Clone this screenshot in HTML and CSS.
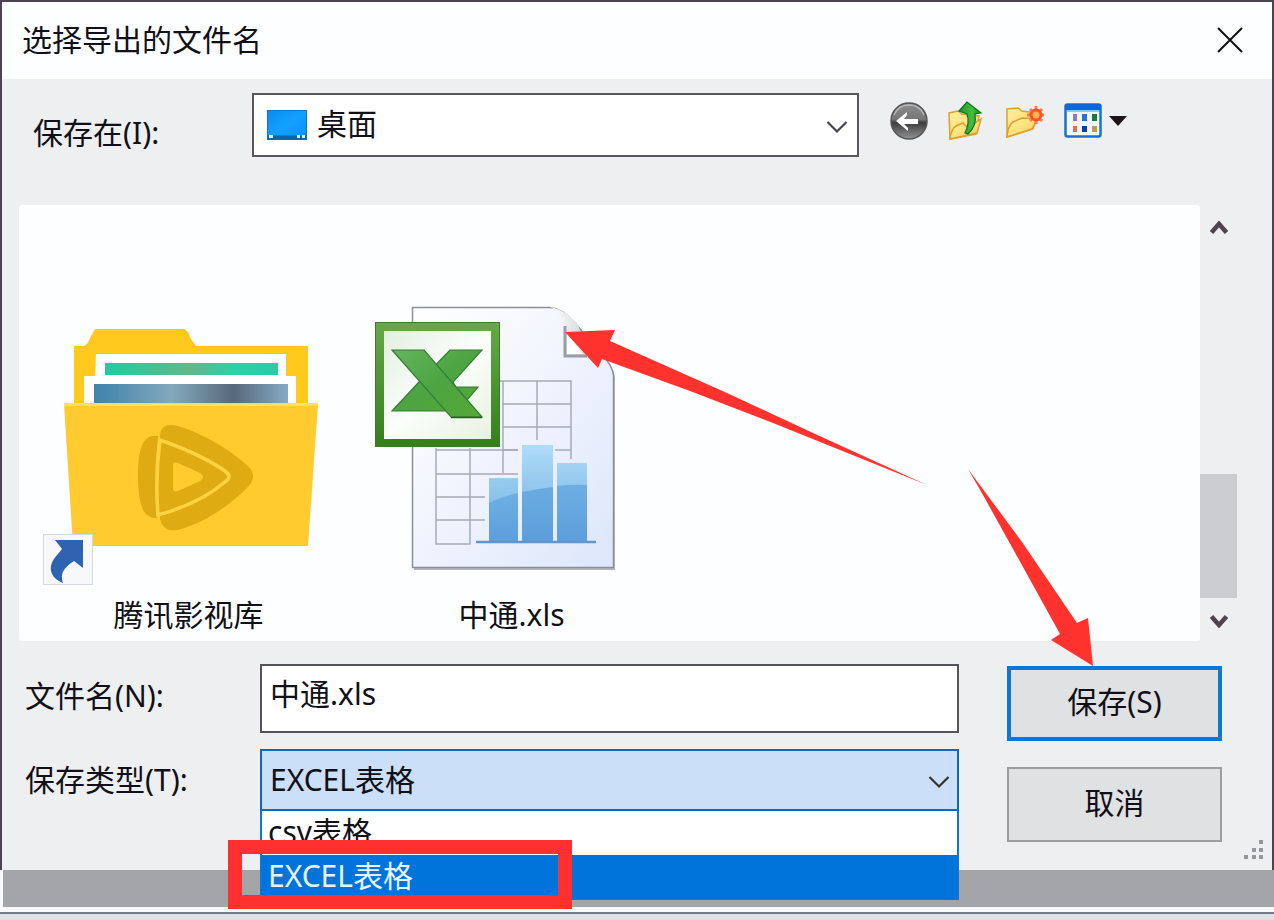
FILE: index.html
```html
<!DOCTYPE html>
<html lang="zh-CN">
<head>
<meta charset="utf-8">
<meta name="viewport" content="width=device-width, initial-scale=1">
<title>选择导出的文件名</title>
<link rel="stylesheet" href="styles.css">
</head>
<body>
<main class="dialog">
  <header class="titlebar">
    <h1 class="title">选择导出的文件名</h1>
    <button class="close" type="button" aria-label="关闭">
      <svg width="26" height="26" viewBox="0 0 26 26"><path d="M1 1L25 25M25 1L1 25" stroke="#111" stroke-width="2" fill="none"/></svg>
    </button>
  </header>

  <section class="lookin">
    <label class="lookin-label" for="folder">保存在(I):</label>
    <div class="combo">
      <svg class="combo-icon" width="40" height="30" viewBox="0 0 40 30">
        <defs><linearGradient id="desk" x1="0" y1="0" x2="1" y2="1"><stop offset="0" stop-color="#0a8cf0"/><stop offset=".5" stop-color="#14a0ff"/><stop offset="1" stop-color="#0492fa"/></linearGradient></defs>
        <rect x=".5" y=".5" width="39" height="29" fill="url(#desk)" stroke="#0874c4"/>
        <path d="M1 25.500h38v4H1z" fill="#0865ae"/>
        <path d="M2 25h4v3H2zM30 25h3v3h-3zM35 25h3v3h-3z" fill="#d8f1ff"/>
      </svg>
      <select class="combo-select" id="folder"><option>桌面</option></select>
      <svg class="chevron" width="22" height="14" viewBox="0 0 22 14"><path d="M1.500 2L11 11.500L20.500 2" stroke="#4a4350" stroke-width="2.200" fill="none"/></svg>
    </div>
    <div class="tools">
      <button class="tool" type="button" aria-label="后退">
        <svg width="40" height="40" viewBox="0 0 40 40">
          <defs><linearGradient id="ball" x1="0" y1="0" x2="0" y2="1"><stop offset="0" stop-color="#8c8c8c"/><stop offset=".45" stop-color="#777"/><stop offset=".55" stop-color="#3d3d3d"/><stop offset="1" stop-color="#949494"/></linearGradient></defs>
          <circle cx="20" cy="20" r="18" fill="url(#ball)" stroke="#555" stroke-width="1.500"/>
          <path d="M5 14C8 7 14 4 20 4s12 3 15 10" stroke="#ccc" stroke-width="1.500" fill="none" opacity=".7"/>
          <path d="M7 20L18 11V14L15 18H29V23H15L19 27V30z" fill="#fff"/>
        </svg>
      </button>
      <button class="tool" type="button" aria-label="向上一级">
        <svg width="40" height="40" viewBox="0 0 40 40">
          <defs>
            <linearGradient id="paper" x1="0" y1="0" x2="1" y2="1"><stop offset="0" stop-color="#fff0a0"/><stop offset=".5" stop-color="#ffe27a"/><stop offset="1" stop-color="#f5bd38"/></linearGradient>
            <linearGradient id="leaf" x1="0" y1="0" x2="1" y2="0"><stop offset="0" stop-color="#1d9428"/><stop offset=".6" stop-color="#45bd3d"/><stop offset="1" stop-color="#0f8020"/></linearGradient>
          </defs>
          <path d="M2 12L11 10L15 13L32 15L29 33L3 38z" fill="url(#paper)" stroke="#dba030" stroke-width="1.500"/>
          <path d="M3 38Q4 28 9 25L16 22L21 27L34 18L30 32z" fill="url(#paper)" stroke="#dba030" stroke-width="1.500"/>
          <path d="M12 10L20 1L34 12L28 13Q30 25 21 33L18 32Q23 22 20 13z" fill="url(#leaf)" stroke="#0c7420" stroke-width="1.200"/>
        </svg>
      </button>
      <button class="tool" type="button" aria-label="新建文件夹">
        <svg width="40" height="40" viewBox="0 0 40 40">
          <path d="M2 8L13 7L17 10L32 12L28 28L2 36z" fill="url(#paper)" stroke="#dba030" stroke-width="1.500"/>
          <path d="M2 36Q3 24 8 21L17 17L33 18L27 28z" fill="url(#paper)" stroke="#dba030" stroke-width="1.500"/>
          <path d="M31 5v18M22 14h17M25 8l12 12M37 8L25 20" stroke="#ff7a50" stroke-width="3"/>
          <circle cx="31" cy="14" r="5" fill="#ffb45a" stroke="#f85426" stroke-width="3"/>
        </svg>
      </button>
      <button class="tool tool-view" type="button" aria-label="查看">
        <svg width="64" height="40" viewBox="0 0 64 40">
          <rect x="2.500" y="3.500" width="35" height="32" rx="2" fill="#f1f9ff" stroke="#1672d6" stroke-width="2.500"/>
          <path d="M2 5q0-2 2-2h32q2 0 2 2v4H2z" fill="#0d68d4"/>
          <path d="M4 10h32" stroke="#8ac6ff" stroke-width="2"/>
          <path d="M10 13h4v7h-4z" fill="#8f78c6"/><path d="M19 13h5v7h-5z" fill="#2b70d8"/><path d="M29 13h5v7h-5z" fill="#167b3d"/>
          <path d="M10 25h4v6h-4z" fill="#e96a5c"/><path d="M19 25h5v6h-5z" fill="#0d39a3"/><path d="M29 25h5v6h-5z" fill="#c5993d"/>
          <path d="M46 15H64L55 25z" fill="#1b1518"/>
        </svg>
      </button>
    </div>
  </section>

  <section class="browser">
    <div class="files">
      <figure class="file">
        <svg class="file-icon" viewBox="27 300 323 290">
          <defs>
            <linearGradient id="photo1"><stop offset="0" stop-color="#23cba2"/><stop offset=".5" stop-color="#5fb98b"/><stop offset=".75" stop-color="#30cfa7"/><stop offset="1" stop-color="#2ccba6"/></linearGradient>
            <linearGradient id="photo2"><stop offset="0" stop-color="#3e82ab"/><stop offset=".4" stop-color="#83a9bd"/><stop offset=".72" stop-color="#57697a"/><stop offset="1" stop-color="#86a9c5"/></linearGradient>
          </defs>
          <path d="M74 346H84Q88 344 90 338L95 329H184Q188 330 191 339L196 346H308V406H74z" fill="#ffc91e"/>
          <path d="M96 354H286V376H296V406H84V376H95z" fill="#fff"/>
          <path d="M105 363H278V375H105z" fill="url(#photo1)"/>
          <path d="M94 384H288V404H94z" fill="url(#photo2)"/>
          <path d="M64 404H318L308 546H73z" fill="#ffcb2f"/>
          <path d="M64 404.500H318" stroke="#ffdf67" stroke-width="3"/>
          <path d="M158 436C144 434 138 446 138 476S144 519 157 518Q153 477 158 436z" fill="#dfab13"/>
          <path d="M160 435Q161 422 178 426C202 433 229 449 248 466Q258 476 248 487C226 509 202 523 181 529Q163 534 160 519z" fill="#dfab13"/>
          <path d="M160 440C180 447 205 457 225 471Q233 477 225 482C205 499 180 509 158 515Q155 477 160 440z" fill="#dfab13" stroke="#ffd33e" stroke-width="3.500"/>
          <path d="M173 464Q174 461 178 463L200 473Q206 477 200 481L178 491Q173 493 173 488z" fill="#ffcb2f"/>
          <rect x="43.500" y="534.500" width="49" height="50" fill="#f8f8fa" stroke="#d5d8e0"/>
          <path d="M55 540H83V568L74 561C63 568 60 574 63 583C50 578 46 566 58 554L62 549z" fill="#2e63b1"/>
        </svg>
        <figcaption class="file-name">腾讯影视库</figcaption>
      </figure>
      <figure class="file">
        <svg class="file-icon" viewBox="350 300 323 290">
          <defs>
            <linearGradient id="sheet" x1="0" y1="0" x2="1" y2="1"><stop offset="0" stop-color="#fff"/><stop offset=".4" stop-color="#f4f6fe"/><stop offset="1" stop-color="#dce6fa"/></linearGradient>
            <linearGradient id="frame" x1="0" y1="0" x2="0" y2="1"><stop offset="0" stop-color="#65a94c"/><stop offset="1" stop-color="#357f18"/></linearGradient>
            <linearGradient id="face" x1="0" y1="0" x2="1" y2="1"><stop offset="0" stop-color="#e2f0e0"/><stop offset=".5" stop-color="#fbfefb"/><stop offset="1" stop-color="#e7f2e0"/></linearGradient>
            <linearGradient id="bar" x1="0" y1="0" x2="0" y2="1"><stop offset="0" stop-color="#74b5e5"/><stop offset="1" stop-color="#5b9edb"/></linearGradient>
            <linearGradient id="gloss" x1="0" y1="0" x2="0" y2="1"><stop offset="0" stop-color="#b0dcf7"/><stop offset="1" stop-color="#86c0ea"/></linearGradient>
            <linearGradient id="cross" x1="0" y1="0" x2="1" y2="1"><stop offset="0" stop-color="#64b55b"/><stop offset=".5" stop-color="#4da442"/><stop offset="1" stop-color="#55a936"/></linearGradient>
            <linearGradient id="curl"><stop offset="0" stop-color="#fff"/><stop offset="1" stop-color="#d3d5da"/></linearGradient>
          </defs>
          <path d="M414 309H552Q564 310 577 325L604 357Q614 367 615 378V570H414z" fill="#b5b7c0"/>
          <path d="M412.500 307.500H550Q562 308 575 323L602 355Q613 366 613.500 376V567.500H412.500z" fill="url(#sheet)" stroke="#8b8f9c" stroke-width="1.500"/>
          <path d="M550 307.500Q564 311 565 333V357H587L578 324Q563 308 550 307.500z" fill="url(#curl)"/>
          <path d="M565 326V356H587" fill="none" stroke="#9a9ca8" stroke-width="3"/>
          <path d="M567 334L583 354H567z" fill="#fff"/>
          <g fill="none" stroke="#a6abb9" stroke-width="1.500">
            <path d="M500 381H571V459M502 404H571M502 427H571M502 450H518M555 450H571M503 381V473M537 381V440"/>
            <path d="M436 448V544H470V448M436 474H518M436 497H485M436 520H485M436 450H518"/>
          </g>
          <rect x="489" y="478" width="29" height="64" fill="url(#bar)"/>
          <rect x="522" y="445" width="31" height="97" rx="2" fill="url(#bar)"/>
          <rect x="557" y="463" width="30" height="79" fill="url(#bar)"/>
          <path d="M489 478h29v15q-18 4-29 10zM522 447q0-2 2-2h27q2 0 2 2v40q-16 2-31 5zM557 463h30v22q-15-1-30 1z" fill="url(#gloss)"/>
          <path d="M476 542H596" stroke="#5f96cc" stroke-width="2.500"/>
          <rect x="375.500" y="322.500" width="124" height="124" fill="url(#frame)" stroke="#397b2a"/>
          <rect x="384" y="331" width="107" height="108" fill="url(#face)"/>
          <g fill="url(#cross)" stroke="#347d39" stroke-width="1.200">
            <path d="M450 350H482L453 382L456 387H478L467 400L445 411H392L419 382z"/>
            <path d="M392 350H424L482 417H451z"/>
          </g>
          <path d="M451 417.500H482" stroke="#265d22" stroke-width="1.500"/>
        </svg>
        <figcaption class="file-name">中通.xls</figcaption>
      </figure>
    </div>
    <div class="scrollbar">
      <button class="scroll-button" type="button" aria-label="向上滚动"><svg width="18" height="16" viewBox="0 0 18 16"><path d="M1.500 13.500L9 5L16.500 13.500" stroke="#50434d" stroke-width="4.500" fill="none"/></svg></button>
      <div class="track"><div class="thumb"></div></div>
      <button class="scroll-button" type="button" aria-label="向下滚动"><svg width="18" height="16" viewBox="0 0 18 16"><path d="M1.500 4.500L9 13L16.500 4.500" stroke="#50434d" stroke-width="4.500" fill="none"/></svg></button>
    </div>
  </section>

  <form class="form">
    <div class="fields">
      <label class="field-label label-name" for="name">文件名(N):</label>
      <input class="name-input" id="name" type="text" value="中通.xls">
      <label class="field-label" for="type">保存类型(T):</label>
      <div class="type">
        <select class="type-select" id="type"><option>EXCEL表格</option><option>csv表格</option></select>
        <svg class="chevron" width="22" height="14" viewBox="0 0 22 14"><path d="M1.500 2L11 11.500L20.500 2" stroke="#333" stroke-width="2.200" fill="none"/></svg>
        <div class="menu" role="listbox" aria-label="保存类型">
          <button class="option" type="button" role="option" aria-selected="false">csv表格</button>
          <button class="option option-on" type="button" role="option" aria-selected="true">EXCEL表格</button>
        </div>
      </div>
    </div>
    <div class="actions">
      <button class="action action-main" type="button">保存(S)</button>
      <button class="action" type="button">取消</button>
    </div>
    <svg class="grip" width="20" height="20" viewBox="0 0 20 20"><path d="M15 0h4v4h-4zM8 8h4v4H8zM15 8h4v4h-4zM0 15h4v4H0zM8 15h4v4H8zM15 15h4v4h-4z" fill="#96979c"/></svg>
  </form>
</main>
<div class="backdrop"></div>
<div class="taskline"></div>

<svg class="marks" width="1274" height="920" viewBox="0 0 1274 920" aria-hidden="true">
  <path d="M565 332L615 330L610 341L727 393L813 433L927 485L773 423L690 391L602 359L598 368z" fill="#ff322d"/>
  <path d="M968 469L1022 542L1077 623L1088 618L1093 666L1051 640L1060 634L1018 558L983 495z" fill="#ff322d"/>
  <path d="M235 847H565V902H235z" fill="none" stroke="#ff302f" stroke-width="14"/>
</svg>
</body>
</html>
```
FILE: styles.css
```css
* {
  box-sizing: border-box;
}

html,
body {
  min-height: 100%;
}

body {
  display: flex;
  flex-direction: column;
  min-height: 100vh;
  margin: 0;
  position: relative;
  overflow: hidden;
  background: #f9f9fb;
  color: #111018;
  font: 30px/40px "Noto Sans", "Noto Sans CJK SC", sans-serif;
}

button,
input,
select {
  margin: 0;
  padding: 0;
  border: 0;
  border-radius: 0;
  background: none;
  color: inherit;
  font: inherit;
  appearance: none;
  outline: 0;
}

svg {
  display: block;
}

.dialog {
  background: #eeeff1;
  border: 2px solid #4b4552;
  border-bottom: 0;
}

.titlebar {
  display: flex;
  align-items: center;
  justify-content: space-between;
  height: 77px;
  padding: 0 29px 2px 20px;
  background: #fdfeff;
}

.title {
  margin: 0;
  font-size: 30px;
  font-weight: 400;
}

.lookin {
  display: flex;
  align-items: flex-start;
  padding: 14px 20px 48px 31px;
}

.lookin-label {
  flex: 0 0 219px;
  padding-top: 20px;
}

.combo {
  position: relative;
  display: flex;
  flex: 1;
  align-items: center;
  height: 64px;
  padding-left: 13px;
  border: 2px solid #5a5660;
  background: #fff;
}

.combo-select {
  flex: 1;
  height: 60px;
  padding: 0 10px 2px;
}

.chevron {
  position: absolute;
  right: 9px;
  top: 50%;
  margin-top: -5px;
  pointer-events: none;
}

.tools {
  display: flex;
  gap: 18px;
  flex: 0 0 393px;
  padding: 8px 0 0 30px;
}

.browser {
  display: flex;
  padding: 0 35px 0 17px;
}

.files {
  display: flex;
  flex: 1;
  padding: 95px 8px 6px;
  border-radius: 3px;
  background: #fdfeff;
}

.file {
  width: 323px;
  margin: 0;
}

.file-icon {
  width: 323px;
  height: 290px;
}

.file-name {
  margin-top: 5px;
  text-align: center;
}

.scrollbar {
  display: flex;
  flex-direction: column;
  width: 37px;
}

.scroll-button {
  display: flex;
  align-items: center;
  justify-content: center;
  height: 43px;
}

.track {
  display: flex;
  flex: 1;
  flex-direction: column;
  justify-content: flex-end;
}

.thumb {
  height: 124px;
  background: #cbccd0;
}

.form {
  position: relative;
  display: flex;
  gap: 48px;
  padding: 23px 50px 28px 23px;
}

.fields {
  display: grid;
  flex: 1;
  grid-template-columns: 235px 1fr;
  align-content: start;
  align-items: center;
  row-gap: 16px;
}

.label-name {
  padding-bottom: 6px;
}

.name-input {
  width: 100%;
  height: 69px;
  padding: 0 8px 14px;
  border: 2px solid #55525a;
  background: #fff;
}

.type {
  position: relative;
}

.type-select {
  display: block;
  width: 100%;
  height: 62px;
  padding: 0 8px;
  border: 2px solid #0f69b8;
  background: #cbe0f8;
}

.menu {
  position: absolute;
  top: 100%;
  left: 0;
  right: 0;
  border: 2px solid #0878d8;
  border-width: 0 2px 1px;
  background: #fff;
}

.option {
  display: block;
  width: 100%;
  height: 44px;
  padding: 0 6px 2px;
  text-align: left;
}

.option-on {
  background: #0074db;
  color: #e4f3ff;
}

.actions {
  display: flex;
  flex: 0 0 215px;
  flex-direction: column;
  gap: 26px;
  padding-top: 2px;
}

.action {
  height: 75px;
  padding-bottom: 3px;
  border: 2px solid #9c9da1;
  background: #e0e1e3;
}

.action-main {
  border: 4px solid #0878dc;
}

.grip {
  position: absolute;
  right: 8px;
  bottom: 10px;
}

.backdrop {
  height: 37px;
  margin-left: 3px;
  background: #a4a5a8;
}

.taskline {
  flex: 1;
  margin-top: 5px;
  border-top: 2px solid #747b85;
  background: #e0e1e5;
}

.marks {
  position: absolute;
  top: 0;
  left: 0;
  pointer-events: none;
}
```
